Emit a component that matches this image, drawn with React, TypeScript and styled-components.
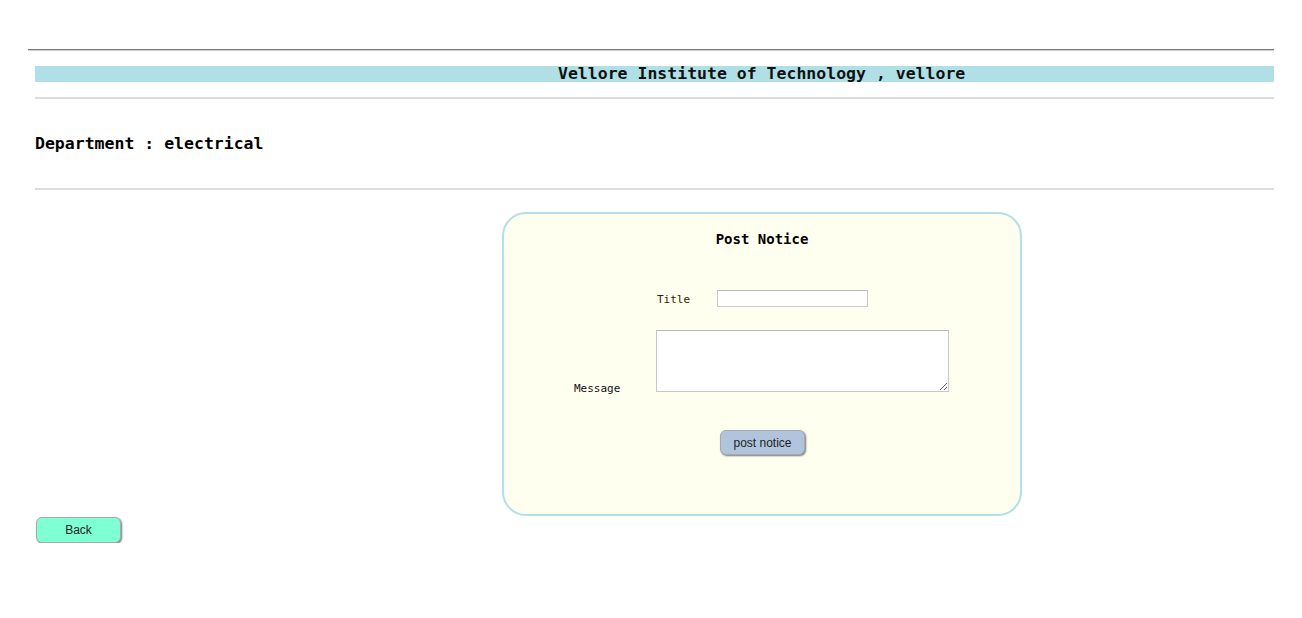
import React from "react";
import styled, { createGlobalStyle } from "styled-components";

const Global = createGlobalStyle`
  html, body { margin: 0; padding: 0; background: #ffffff; }
  body { font-family: "DejaVu Sans Mono", "Liberation Mono", monospace; color: #000; }
`;

const Page = styled.div`
  padding: 49px 28px 0 28px;
`;

const TopRule = styled.div`
  height: 1px;
  background: #7a7a7a;
  box-shadow: 0 1px 0 #cfcfcf;
`;

const Content = styled.div`
  padding-left: 7px;
  padding-top: 16px;
`;

const Banner = styled.div`
  height: 16px;
  background: #b0e0e6;
  padding-left: 523px;
  font-size: 16.5px;
  font-weight: bold;
  line-height: 16px;
  color: #111;
  white-space: nowrap;
`;

const Rule = styled.div<{ $top: number }>`
  height: 2px;
  margin-top: ${(p) => p.$top}px;
  background: #dcdcdc;
`;

const Dept = styled.div`
  margin-top: 36px;
  font-size: 16.5px;
  font-weight: bold;
  line-height: 18px;
  white-space: nowrap;
`;

const Panel = styled.div`
  margin: 22px 0 0 467px;
  width: 520px;
  height: 304px;
  box-sizing: border-box;
  border: 2px solid #b2e0e7;
  border-radius: 24px;
  background: #fffff0;
  display: flex;
  flex-direction: column;
`;

const Heading = styled.div`
  margin-top: 17px;
  text-align: center;
  font-size: 14px;
  font-weight: bold;
  line-height: 16px;
`;

const FieldRow = styled.div<{ $top: number; $left: number; $gap: number }>`
  display: flex;
  align-items: flex-end;
  margin-top: ${(p) => p.$top}px;
  padding-left: ${(p) => p.$left}px;
  gap: ${(p) => p.$gap}px;
`;

const Label = styled.span<{ $color: string; $shift: number }>`
  font-size: 11px;
  line-height: 13px;
  color: ${(p) => p.$color};
  margin-bottom: ${(p) => p.$shift}px;
  white-space: nowrap;
`;

const TextInput = styled.input`
  width: 151px;
  height: 17px;
  box-sizing: border-box;
  border: 1px solid #c8c8c8;
  border-top-color: #b8b8b8;
  background: #fff;
  margin: 0;
  padding: 0 2px;
  font-size: 12px;
`;

const TextArea = styled.textarea`
  width: 293px;
  height: 62px;
  box-sizing: border-box;
  border: 1px solid #c8c8c8;
  border-top-color: #b8b8b8;
  background: #fff;
  margin: 0;
  padding: 2px;
  font-size: 12px;
  font-family: "DejaVu Sans Mono", monospace;
`;

const Pill = styled.button<{ $bg: string; $h: number }>`
  width: 85px;
  height: ${(p) => p.$h}px;
  box-sizing: border-box;
  border: 1px solid #a9a9a9;
  border-radius: 6px;
  background: ${(p) => p.$bg};
  box-shadow: 1px 1px 2px #777;
  font-family: "Liberation Sans", Arial, sans-serif;
  font-size: 12px;
  color: #222;
  padding: 0;
  cursor: pointer;
`;

const ButtonRow = styled.div`
  display: flex;
  justify-content: center;
  margin-top: 38px;
  padding-left: 1px;
`;

const BackWrap = styled.div`
  margin: 1px 0 0 1px;
`;

export default function App() {
  return (
    <>
      <Global />
      <Page>
        <TopRule />
        <Content>
          <Banner>Vellore Institute of Technology , vellore</Banner>
          <Rule $top={15} />
          <Dept>Department : electrical</Dept>
          <Rule $top={35} />
          <Panel>
            <Heading>Post Notice</Heading>
            <FieldRow $top={43} $left={153} $gap={27}>
              <Label $color="#3a1a00" $shift={1}>Title</Label>
              <TextInput type="text" />
            </FieldRow>
            <FieldRow $top={23} $left={70} $gap={36}>
              <Label $color="#111" $shift={-3}>Message</Label>
              <TextArea />
            </FieldRow>
            <ButtonRow>
              <Pill $bg="#b0c4de" $h={25}>post notice</Pill>
            </ButtonRow>
          </Panel>
          <BackWrap>
            <Pill $bg="#7fffd4" $h={26}>Back</Pill>
          </BackWrap>
        </Content>
      </Page>
    </>
  );
}
